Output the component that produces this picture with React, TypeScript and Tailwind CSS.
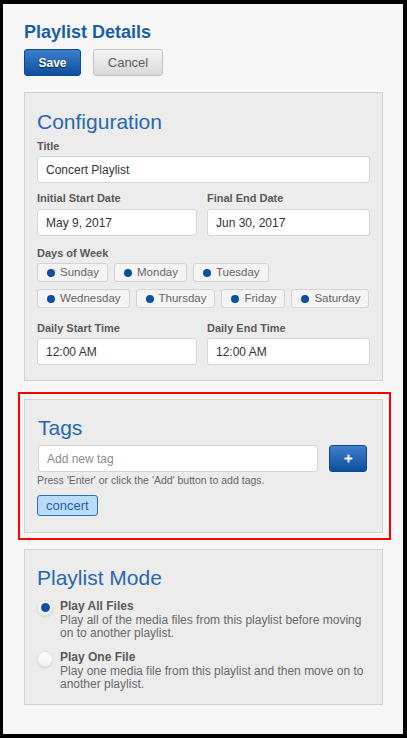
import { Plus } from 'lucide-react';
import type { ReactNode } from 'react';

const font = { fontFamily: '"Liberation Sans", Arial, sans-serif' };

const Label = ({ children }: { children: string }) => (
  <div className="text-[11px] leading-[14px] font-bold text-[#5a5a5a]">{children}</div>
);

const Field = ({ value, placeholder }: { value?: string; placeholder?: string }) => (
  <div className="h-[27px] bg-white border border-[#d6d6d6] rounded-[3px] flex items-center pl-[8px] text-[12px]">
    {value ? <span className="text-[#333]">{value}</span> : <span className="text-[#8a8a8a]">{placeholder}</span>}
  </div>
);

const Heading = ({ children }: { children: string }) => (
  <h2 className="text-[21px] leading-[24px] text-[#2767b1] font-normal">{children}</h2>
);

const Day = ({ name }: { name: string }) => (
  <div className="h-[19px] flex items-center gap-[5px] pl-[9px] pr-[8px] bg-[#f4f4f4] border border-[#d3d3d3] rounded-[3px] text-[11.5px] text-[#666]">
    <span className="w-[8px] h-[8px] rounded-full bg-[#0d4fa0]" />
    {name}
  </div>
);

const Radio = ({ checked, title, desc }: { checked: boolean; title: string; desc: ReactNode }) => (
  <div className="flex gap-[7px]">
    <div className="w-[16px] h-[16px] mt-[1px] shrink-0 rounded-full bg-gradient-to-b from-white to-[#f1f1f1] border border-[#e0e0e0] shadow-[0_1px_2px_rgba(0,0,0,0.12)] flex items-center justify-center">
      {checked && <span className="w-[9px] h-[9px] rounded-full bg-[#0d4fa0]" />}
    </div>
    <div>
      <div className="text-[12px] leading-[14px] font-bold text-[#5a5a5a]">{title}</div>
      <div className="text-[12px] leading-[13px] text-[#6a6a6a] mt-[1px]">{desc}</div>
    </div>
  </div>
);

export default function App() {
  const row1 = ['Sunday', 'Monday', 'Tuesday'];
  const row2 = ['Wednesday', 'Thursday', 'Friday', 'Saturday'];

  return (
    <div className="w-[407px] h-[738px] bg-black pt-[4px] pl-[3px] pr-[4px] pb-[4px]" style={font}>
      <div className="h-full bg-[#f7f7f7] pt-[18px] pl-[21px] pr-[20px]">
        <h1 className="text-[18px] leading-[20px] font-bold text-[#1b5ea8]">Playlist Details</h1>

        <div className="flex gap-[12px] mt-[7px]">
          <button className="w-[57px] h-[27px] rounded-[3px] border border-[#0b4a91] bg-gradient-to-b from-[#3d7fcc] to-[#0d4e9a] text-white text-[12px] font-bold [text-shadow:0_1px_1px_rgba(0,0,0,0.6)]">
            Save
          </button>
          <button className="w-[70px] h-[27px] rounded-[3px] border border-[#c4c4c4] bg-gradient-to-b from-[#f4f4f4] to-[#dadada] text-[#5e5e5e] text-[13px]">
            Cancel
          </button>
        </div>

        {/* configuration */}
        <section className="mt-[16px] bg-[#ececec] border border-[#d2d2d2] pt-[17px] pb-[15px] px-[12px]">
          <Heading>Configuration</Heading>
          <div className="mt-[5px]">
            <Label>Title</Label>
            <div className="mt-[3px]">
              <Field value="Concert Playlist" />
            </div>
          </div>

          <div className="grid grid-cols-[160px_1fr] gap-x-[10px] mt-[8px]">
            <Label>Initial Start Date</Label>
            <Label>Final End Date</Label>
            <div className="mt-[4px]"><Field value="May 9, 2017" /></div>
            <div className="mt-[4px]"><Field value="Jun 30, 2017" /></div>
          </div>

          <div className="mt-[10px]">
            <Label>Days of Week</Label>
            <div className="flex gap-[6px] mt-[3px]">
              {row1.map((d) => <Day key={d} name={d} />)}
            </div>
            <div className="flex gap-[6px] mt-[7px]">
              {row2.map((d) => <Day key={d} name={d} />)}
            </div>
          </div>

          <div className="grid grid-cols-[160px_1fr] gap-x-[10px] mt-[13px]">
            <Label>Daily Start Time</Label>
            <Label>Daily End Time</Label>
            <div className="mt-[3px]"><Field value="12:00 AM" /></div>
            <div className="mt-[3px]"><Field value="12:00 AM" /></div>
          </div>
        </section>

        {/* tags, outlined in red */}
        <div className="relative mt-[18px]">
          <span className="absolute -left-[6px] -top-[7px] -right-[8px] -bottom-[7px] border-2 border-[#ff0000] pointer-events-none" />
          <section className="bg-[#ececec] border border-[#d2d2d2] pt-[16px] pb-[15px] pl-[13px] pr-[15px]">
            <Heading>Tags</Heading>
            <div className="flex gap-[11px] mt-[5px]">
              <div className="flex-1"><Field placeholder="Add new tag" /></div>
              <button className="w-[38px] h-[27px] rounded-[3px] border border-[#0b4a91] bg-gradient-to-b from-[#3d7fcc] to-[#0d4e9a] flex items-center justify-center">
                <Plus size={11} strokeWidth={4} className="text-white" />
              </button>
            </div>
            <div className="text-[10.5px] leading-[13px] text-[#666] mt-[2px] -ml-[1px]">
              Press 'Enter' or click the 'Add' button to add tags.
            </div>
            <div className="mt-[8px] -ml-[1px] inline-flex items-center h-[21px] px-[8px] rounded-[3px] bg-[#b8dcfa] border border-[#2d6fbf] text-[13px] text-[#1f5fa8]">
              concert
            </div>
          </section>
        </div>

        {/* playlist mode */}
        <section className="mt-[16px] bg-[#ececec] border border-[#d2d2d2] pt-[16px] pb-[13px] pl-[12px] pr-[12px]">
          <Heading>Playlist Mode</Heading>
          <div className="mt-[9px] flex flex-col gap-[10px]">
            <Radio
              checked
              title="Play All Files"
              desc={<>Play all of the media files from this playlist before moving<br />on to another playlist.</>}
            />
            <Radio
              checked={false}
              title="Play One File"
              desc="Play one media file from this playlist and then move on to another playlist."
            />
          </div>
        </section>
      </div>
    </div>
  );
}
